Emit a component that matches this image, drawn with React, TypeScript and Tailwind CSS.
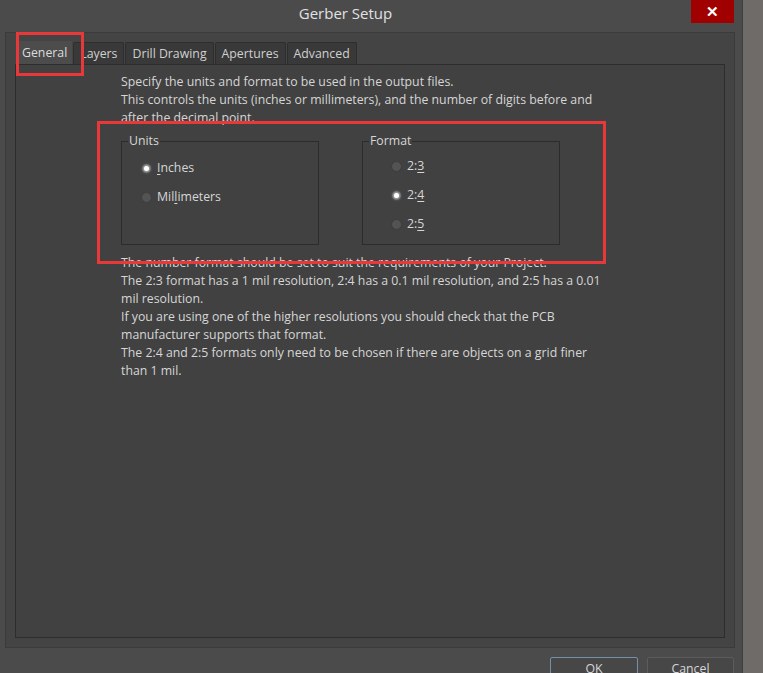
import React from "react";

const font = { fontFamily: '"Open Sans", "Noto Sans", sans-serif' };

const tabs = ["General", "Layers", "Drill Drawing", "Apertures", "Advanced"];

function Radio({ checked }: { checked?: boolean }) {
  return (
    <span className="flex h-[11px] w-[11px] items-center justify-center rounded-full border border-[#3c3c3c] bg-[#535353]">
      {checked && (
        <span className="h-[5px] w-[5px] rounded-full bg-white shadow-[0_0_3px_1px_rgba(255,255,255,0.7)]" />
      )}
    </span>
  );
}

function GroupBox({
  title,
  children,
}: {
  title: string;
  children: React.ReactNode;
}) {
  return (
    <div className="relative h-[104px] w-[198px] border border-[#2c2c2c]">
      <span className="absolute -top-[10px] left-[6px] bg-[#414141] px-[1px] text-[12.3px] leading-[18px]">
        {title}
      </span>
      {children}
    </div>
  );
}

export default function App() {
  return (
    <div
      className="relative flex h-[673px] w-[763px] overflow-hidden bg-[#4b4b4b] text-[#d6d6d6]"
      style={font}
    >
      {/* dialog */}
      <div className="flex w-[743px] shrink-0 flex-col border-r border-[#3e3e3e]">
        {/* title bar */}
        <div className="flex h-[32px] shrink-0 items-start">
          <div className="flex-1 pt-[2px] text-center text-[15px] text-[#e2e2e2]">
            Gerber Setup
          </div>
          <div className="mr-[8px] flex h-[23px] w-[43px] items-center justify-center bg-[#a00000] text-[15px] font-bold text-white">
            ✕
          </div>
        </div>

        {/* outer panel */}
        <div className="ml-[5px] mr-[7px] flex h-[616px] shrink-0 flex-col border border-[#3b3b3b] bg-[#444444] px-[9px] pb-[9px] pt-[8px]">
          <div className="flex h-[23px] shrink-0 items-end pl-[2px]">
            {tabs.map((t, i) => (
              <div
                key={t}
                className={
                  i === 0
                    ? "flex h-[23px] items-center bg-[#4c4c4c] px-[5px] pt-[2px] text-[12.3px] text-[#dcdcdc]"
                    : "ml-[1px] flex h-[22px] items-center rounded-t-[2px] border border-b-0 border-[#2e2e2e] bg-[#393939] px-[6px] pt-[2px] text-[12.3px] text-[#d0d0d0]"
                }
              >
                {t}
              </div>
            ))}
          </div>

          {/* content panel */}
          <div className="flex-1 border border-[#2d2d2d] bg-[#414141] pl-[105px] pt-[8px] text-[12.3px] leading-[18px]">
            <div className="whitespace-nowrap">
              <div>Specify the units and format to be used in the output files.</div>
              <div>
                This controls the units (inches or millimeters), and the number of
                digits before and
              </div>
              <div>after the decimal point.</div>
            </div>

            <div className="mt-[14px] flex gap-[43px]">
              <GroupBox title="Units">
                <div className="flex flex-col gap-[11px] pl-[19px] pt-[17px]">
                  <div className="flex items-center gap-[5px]">
                    <Radio checked />
                    <span>
                      <span className="underline underline-offset-2">I</span>nches
                    </span>
                  </div>
                  <div className="flex items-center gap-[5px]">
                    <Radio />
                    <span>
                      Mil<span className="underline underline-offset-2">l</span>imeters
                    </span>
                  </div>
                </div>
              </GroupBox>
              <GroupBox title="Format">
                <div className="flex flex-col gap-[11px] pl-[28px] pt-[15px]">
                  {["3", "4", "5"].map((d) => (
                    <div key={d} className="flex items-center gap-[5px]">
                      <Radio checked={d === "4"} />
                      <span>
                        2:<span className="underline underline-offset-2">{d}</span>
                      </span>
                    </div>
                  ))}
                </div>
              </GroupBox>
            </div>

            <div className="mt-[9px] whitespace-nowrap">
              <div>The number format should be set to suit the requirements of your Project.</div>
              <div>
                The 2:3 format has a 1 mil resolution, 2:4 has a 0.1 mil resolution,
                and 2:5 has a 0.01
              </div>
              <div>mil resolution.</div>
              <div>
                If you are using one of the higher resolutions you should check that
                the PCB
              </div>
              <div>manufacturer supports that format.</div>
              <div>
                The 2:4 and 2:5 formats only need to be chosen if there are objects on
                a grid finer
              </div>
              <div>than 1 mil.</div>
            </div>
          </div>
        </div>

        {/* buttons */}
        <div className="mr-[8px] mt-[9px] flex shrink-0 justify-end gap-[9px]">
          <div className="flex h-[24px] w-[88px] items-center justify-center rounded-[2px] border border-[#7590ab] bg-[#474747] text-[12.3px]">
            OK
          </div>
          <div className="flex h-[24px] w-[87px] items-center justify-center rounded-[2px] border border-[#5c5c5c] bg-[#474747] text-[12.3px]">
            Cancel
          </div>
        </div>
      </div>

      {/* desktop strip */}
      <div className="flex-1 bg-[#6e6b69]" />

      {/* red highlight annotations */}
      <div className="pointer-events-none absolute left-[16px] top-[32px] h-[44px] w-[68px] border-[3px] border-[#e8383a]" />
      <div className="pointer-events-none absolute left-[97px] top-[121px] h-[143px] w-[509px] border-[3px] border-[#e8383a]" />
    </div>
  );
}
